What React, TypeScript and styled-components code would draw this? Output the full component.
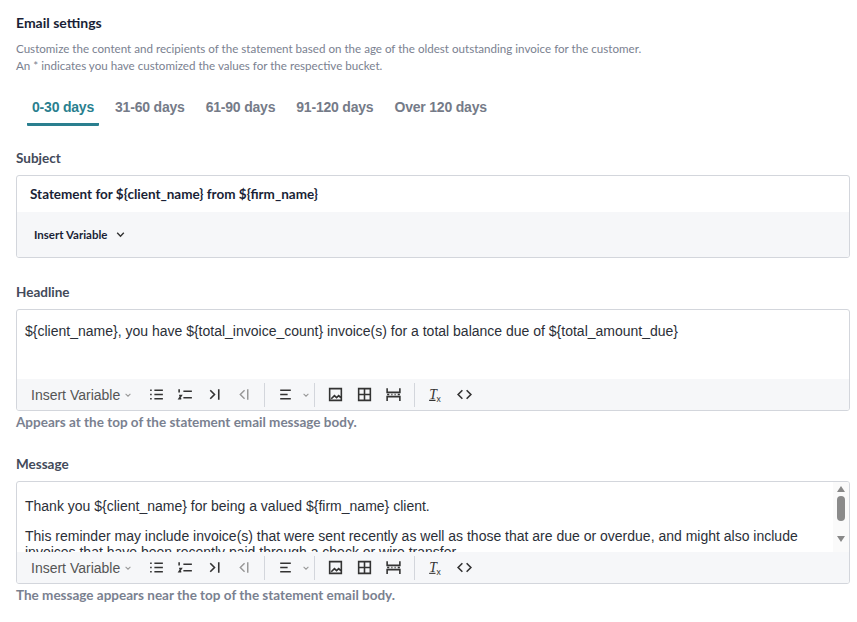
import React from "react";
import styled, { createGlobalStyle } from "styled-components";

const G = createGlobalStyle`
  body { margin: 0; background: #fff; font-family: Lato, "Liberation Sans", sans-serif; }
`;
const Page = styled.div`padding: 14px 9px 0 16px; width: 832px;`;
const Title = styled.div`font-size: 14px; font-weight: 700; color: #1a1f36; line-height: 18px;`;
const Desc = styled.div`margin-top: 8px; font-size: 11.6px; color: #7a8190; line-height: 17px;`;
const Tabs = styled.div`display: flex; gap: 0; margin-top: 25px; padding-left: 11px;`;
const Tab = styled.div<{ $active?: boolean }>`
  font-family: "Liberation Sans", Arial, sans-serif; font-size: 14px; font-weight: 700; letter-spacing: -0.2px;
  padding: 0 5px 8px; margin-right: 11px; color: ${p => (p.$active ? "#2a7f8f" : "#757b88")};
  border-bottom: 3px solid ${p => (p.$active ? "#2a7f8f" : "transparent")}; border-radius: 1px;
`;
const Label = styled.div`font-size: 13.5px; font-weight: 700; color: #434a5a; margin: 26px 0 9px;`;
const Box = styled.div`border: 1px solid #d3d6dc; border-radius: 3px; overflow: hidden; width: 832px;`;
const SubjectInput = styled.div`height: 36px; display: flex; align-items: center; padding-left: 13px;
  font-size: 13.5px; font-weight: 700; color: #1a1f36;`;
const SubjectBar = styled.div`height: 45px; background: #f6f7f9; display: flex; align-items: center; gap: 8px;
  padding-left: 17px; font-size: 11.5px; font-weight: 700; color: #1a1f36;`;
const Editor = styled.div<{ $h: number }>`height: ${p => p.$h}px; padding: 13px 8px 0; box-sizing: border-box; overflow: hidden;
  font-family: "Liberation Sans", Arial, sans-serif; font-size: 14px; color: #2b2f38; line-height: 16px; position: relative;
  p { margin: 0 0 14px; }`;
const Toolbar = styled.div`height: 31px; background: #f6f7f9; display: flex; align-items: center; padding-left: 14px; color: #444;`;
const TBText = styled.span`font-family: "Liberation Sans", Arial, sans-serif; font-size: 14px; color: #555; margin-right: 4px;`;
const Btn = styled.span`display: inline-flex; align-items: center; justify-content: center; width: 24px; height: 24px; margin-right: 5px;`;
const Sep = styled.span`width: 1px; height: 24px; background: #d3d6dc; margin: 0 8px 0 4px;`;
const Help = styled.div`font-size: 13.5px; font-weight: 700; color: #7a8190; margin-top: 3px;`;
const Scroll = styled.div`position: absolute; right: 0; top: 0; width: 16px; height: 100%; background: #fafafa;
  display: flex; flex-direction: column; align-items: center; padding-top: 4px; box-sizing: border-box;`;
const Thumb = styled.div`width: 8px; height: 25px; border-radius: 4px; background: #8a8a8a; margin: 4px 0 15px;`;

const Chev = ({ s = 8, c = "#999" }: { s?: number; c?: string }) => (
  <svg width={s} height={s} viewBox="0 0 10 10"><path d="M2 3.5 5 6.5 8 3.5" fill="none" stroke={c} strokeWidth="1.3" /></svg>
);
const Ic = ({ d }: { d: string }) => (
  <svg width="17" height="17" viewBox="0 0 16 16" fill="none" stroke="#333" strokeWidth="1.5"><path d={d} /></svg>
);

const ToolbarRow = () => (
  <Toolbar>
    <TBText>Insert Variable</TBText><Chev />
    <span style={{ width: 12 }} />
    <Btn><Ic d="M2 4h1.5M2 8h1.5M2 12h1.5M6 4h8M6 8h8M6 12h8" /></Btn>
    <Btn><Ic d="M6 5h8M6 11h8M2 3v3M2 9h2l-2 3h2" /></Btn>
    <Btn><Ic d="M4 4l4 4-4 4M12 3v10" /></Btn>
    <Btn><svg width="17" height="17" viewBox="0 0 16 16" fill="none" stroke="#999" strokeWidth="1.4"><path d="M9 4 5 8l4 4M12 3v10" /></svg></Btn>
    <Sep />
    <Btn><Ic d="M3 4h10M3 8h7M3 12h10" /></Btn><Chev />
    <Sep />
    <Btn><Ic d="M2.5 2.5h11v11h-11zM4 12l3-3 2 2 2-2 2 2M6 6.5h.01" /></Btn>
    <Btn><Ic d="M2.5 2.5h11v11h-11zM8 2.5v11M2.5 8h11" /></Btn>
    <Btn><Ic d="M2 2v4h12V2M2 14v-4h12v4M2 8h2M6 8h1M9 8h1M12 8h2" /></Btn>
    <Sep />
    <Btn><svg width="17" height="17" viewBox="0 0 16 16"><text x="2" y="12" fontSize="13" fontStyle="italic" fontFamily="Liberation Serif" fill="#333">T</text><text x="9" y="15" fontSize="8" fill="#333">x</text><path d="M2 13.5h6" stroke="#333" /></svg></Btn>
    <Btn><Ic d="M6 4 2 8l4 4M10 4l4 4-4 4" /></Btn>
  </Toolbar>
);

export default function App() {
  return (
    <Page>
      <G />
      <Title>Email settings</Title>
      <Desc>Customize the content and recipients of the statement based on the age of the oldest outstanding invoice for the customer.<br />An * indicates you have customized the values for the respective bucket.</Desc>
      <Tabs>
        <Tab $active>0-30 days</Tab><Tab>31-60 days</Tab><Tab>61-90 days</Tab><Tab>91-120 days</Tab><Tab>Over 120 days</Tab>
      </Tabs>
      <Label style={{ marginTop: 24 }}>Subject</Label>
      <Box>
        <SubjectInput>Statement for ${"{client_name}"} from ${"{firm_name}"}</SubjectInput>
        <SubjectBar>Insert Variable <Chev s={11} c="#333" /></SubjectBar>
      </Box>
      <Label>Headline</Label>
      <Box>
        <Editor $h={69}>${"{client_name}"}, you have ${"{total_invoice_count}"} invoice(s) for a total balance due of ${"{total_amount_due}"}</Editor>
        <ToolbarRow />
      </Box>
      <Help>Appears at the top of the statement email message body.</Help>
      <Label>Message</Label>
      <Box>
        <Editor $h={70} style={{ paddingTop: 16 }}>
          <p>Thank you ${"{client_name}"} for being a valued ${"{firm_name}"} client.</p>
          <p>This reminder may include invoice(s) that were sent recently as well as those that are due or overdue, and might also include invoices that have been recently paid through a check or wire transfer.</p>
          <Scroll>
            <svg width="8" height="6" viewBox="0 0 8 6"><path d="M0 6 4 0 8 6z" fill="#888" /></svg>
            <Thumb />
            <svg width="8" height="6" viewBox="0 0 8 6"><path d="M0 0 4 6 8 0z" fill="#888" /></svg>
          </Scroll>
        </Editor>
        <ToolbarRow />
      </Box>
      <Help>The message appears near the top of the statement email body.</Help>
    </Page>
  );
}
